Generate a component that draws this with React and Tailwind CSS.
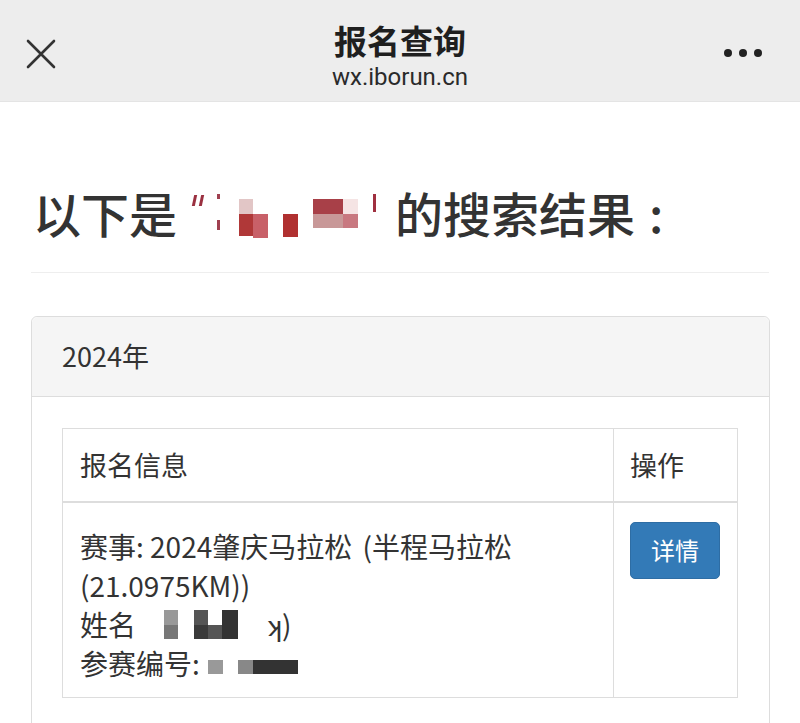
import React from "react";

const font = { fontFamily: '"Noto Sans CJK SC", Roboto, sans-serif' };

const Block = ({ className }) => <span className={`inline-block ${className}`} />;

const App = () => {
  return (
    <div className="w-[800px] h-[723px] overflow-hidden bg-white text-[#333]" style={font}>
      {/* top bar */}
      <div className="h-[102px] bg-[#ededed] grid grid-cols-[100px_1fr_100px] border-b border-[#e4e4e4]">
        <div className="pl-[26px] self-center pt-[6px]">
          <svg width="30" height="30" viewBox="0 0 30 30">
            <path d="M2 2 L28 28 M28 2 L2 28" stroke="#333" strokeWidth="2.6" strokeLinecap="round" />
          </svg>
        </div>
        <div className="flex flex-col items-center pt-[18px]">
          <div className="text-[33px] font-bold leading-[44px] text-[#1f1f1f]">报名查询</div>
          <div className="text-[24px] leading-[30px] text-[#2a2a2a]" style={{ fontFamily: "Roboto, sans-serif" }}>
            wx.iborun.cn
          </div>
        </div>
        <div className="flex justify-end gap-[7px] pr-[38px] self-center pt-[4px]">
          <span className="w-[8px] h-[8px] rounded-full bg-[#222]" />
          <span className="w-[8px] h-[8px] rounded-full bg-[#222]" />
          <span className="w-[8px] h-[8px] rounded-full bg-[#222]" />
        </div>
      </div>

      <div className="px-[31px]">
        {/* heading */}
        <div className="mt-[80px] pb-[30px] border-b border-[#eeeeee]">
          <h1 className="flex items-center h-[60px] pl-[2px] text-[48px] leading-[60px] font-medium text-[#333]">
            <span>以下是</span>
            <span className="relative w-[218px] h-[60px]">
              <span className="absolute left-[16px] top-[13px] w-[3px] h-[11px] bg-[#9a3040] -skew-x-12" />
              <span className="absolute left-[23px] top-[13px] w-[3px] h-[11px] bg-[#9a3040] -skew-x-12" />
              <span className="absolute left-[40px] top-[12px] w-[3px] h-[5px] bg-[#a04050]" />
              <span className="absolute left-[40px] top-[38px] w-[3px] h-[10px] bg-[#a04050]" />
              <Block className="absolute left-[62px] top-[17px] w-[14px] h-[15px] bg-[#e2c6c6]" />
              <Block className="absolute left-[62px] top-[32px] w-[14px] h-[22px] bg-[#b03838]" />
              <Block className="absolute left-[76px] top-[32px] w-[15px] h-[24px] bg-[#c86068]" />
              <Block className="absolute left-[106px] top-[32px] w-[15px] h-[23px] bg-[#b03030]" />
              <Block className="absolute left-[136px] top-[17px] w-[30px] h-[15px] bg-[#a84048]" />
              <Block className="absolute left-[166px] top-[17px] w-[15px] h-[15px] bg-[#f5e4e4]" />
              <Block className="absolute left-[136px] top-[32px] w-[30px] h-[14px] bg-[#c89898]" />
              <Block className="absolute left-[166px] top-[32px] w-[15px] h-[14px] bg-[#c87880]" />
              <span className="absolute left-[196px] top-[12px] w-[3px] h-[18px] bg-[#a03040]" />
            </span>
            <span>的搜索结果</span>
            <span className="ml-[14px]">:</span>
          </h1>
        </div>

        {/* panel */}
        <div className="mt-[43px] border border-[#dddddd] rounded-[6px] w-[739px]">
          <div className="h-[80px] bg-[#f5f5f5] border-b border-[#dddddd] rounded-t-[6px] flex items-center pl-[30px] text-[27px]">
            2024年
          </div>
          <div className="px-[30px] pt-[31px] pb-[30px]">
            <table className="w-[676px] border-collapse text-[28px] text-[#333]">
              <thead>
                <tr className="h-[73px] text-[27px]">
                  <th className="border border-[#dddddd] border-b-2 text-left font-normal pl-[17px] w-[551px]">报名信息</th>
                  <th className="border border-[#dddddd] border-b-2 text-left font-normal pl-[16px]">操作</th>
                </tr>
              </thead>
              <tbody>
                <tr>
                  <td className="border border-[#dddddd] align-top pl-[17px] pt-[24px] pb-[14px] leading-[39px]">
                    <div>
                      赛事: 2024肇庆马拉松 <span className="ml-[4px]">(</span>半程马拉松
                    </div>
                    <div>(21.0975KM))</div>
                    <div className="flex items-center">
                      <span>姓名</span>
                      <span className="ml-[28px] flex flex-col">
                        <Block className="w-[14px] h-[15px] bg-[#999]" />
                        <Block className="w-[14px] h-[14px] bg-[#777]" />
                      </span>
                      <span className="ml-[16px] flex">
                        <span className="flex flex-col">
                          <Block className="w-[14px] h-[15px] bg-[#555]" />
                          <Block className="w-[14px] h-[14px] bg-[#3a3a3a]" />
                        </span>
                        <span className="flex flex-col">
                          <Block className="w-[14px] h-[15px] bg-white" />
                          <Block className="w-[14px] h-[14px] bg-[#555]" />
                        </span>
                        <Block className="w-[16px] h-[29px] bg-[#333]" />
                      </span>
                      <span className="ml-[30px]">ʞ)</span>
                    </div>
                    <div className="flex items-center">
                      <span>参赛编号:</span>
                      <Block className="ml-[8px] w-[15px] h-[14px] bg-[#999] mt-[8px]" />
                      <Block className="ml-[15px] w-[15px] h-[14px] bg-[#888] mt-[8px]" />
                      <Block className="w-[45px] h-[14px] bg-[#333] mt-[8px]" />
                    </div>
                  </td>
                  <td className="border border-[#dddddd] align-top pl-[16px] pt-[19px]">
                    <button className="w-[90px] h-[57px] rounded-[5px] bg-[#337ab7] text-white text-[24px] border border-[#2e6da4]">
                      详情
                    </button>
                  </td>
                </tr>
              </tbody>
            </table>
          </div>
        </div>
      </div>
    </div>
  );
};

export default App;
